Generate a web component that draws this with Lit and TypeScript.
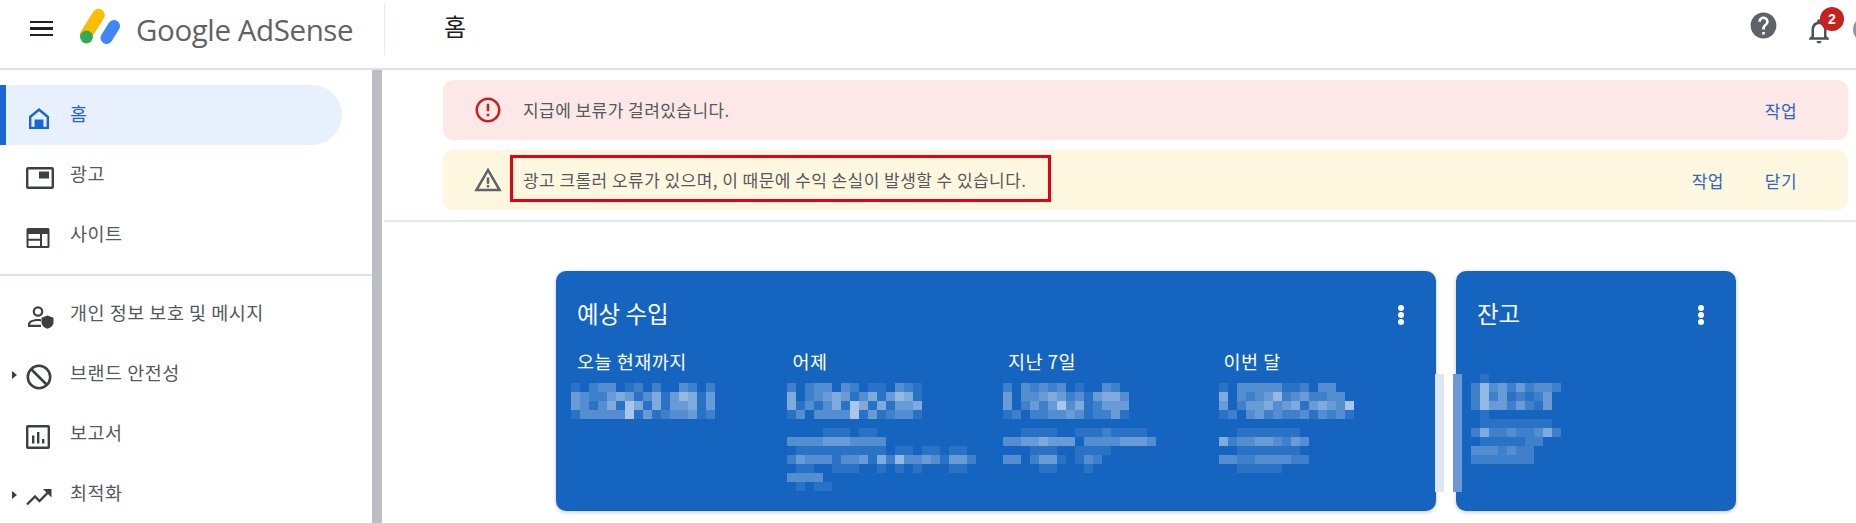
import { LitElement, html, css, svg } from "lit";
import { customElement } from "lit/decorators.js";

const sp = (size: number, d: string, cls = "") => html`<svg class=${cls} width=${size} height=${size} viewBox="0 0 24 24" fill="currentColor"><path d=${d}></path></svg>`;

const ICONS: Record<string, unknown> = {
  home: html`<svg width="26" height="26" viewBox="0 0 26 26"><path d="M13 3 L23 11.2 V24 H3 V11.2 Z M13 6.2 L5.4 12.4 V21.8 H8.6 V14.4 H17.4 V21.8 H20.6 V12.4 Z" fill="#1967d2" fill-rule="evenodd"></path><rect x="9" y="15" width="8" height="8" fill="#1967d2"></rect></svg>`,
  ad: html`<svg width="28" height="24" viewBox="0 0 28 24"><rect x="1.2" y="2.2" width="25.6" height="19.6" rx="1" fill="none" stroke="#3c4043" stroke-width="2.4"></rect><rect x="13" y="5.5" width="10" height="7" fill="#3c4043"></rect></svg>`,
  site: html`<svg width="24" height="22" viewBox="0 0 24 22"><path d="M2 1 H22 A1.5 1.5 0 0 1 23.5 2.5 V19.5 A1.5 1.5 0 0 1 22 21 H2 A1.5 1.5 0 0 1 .5 19.5 V2.5 A1.5 1.5 0 0 1 2 1 Z M2.5 7 V11.8 H14 V7 Z M16 7 V19 H21.5 V7 Z M2.5 13.8 V19 H14 V13.8 Z" fill="#3c4043" fill-rule="evenodd"></path></svg>`,
  privacy: html`<svg width="28" height="24" viewBox="0 0 28 24"><circle cx="12" cy="6.5" r="4.2" fill="none" stroke="#3c4043" stroke-width="2.2"></circle><path d="M2 22 V18.8 C2 15.5 8 14 12 14 C13 14 14 14.1 15 14.3 L15 16.4 C14 16.2 13 16.1 12 16.1 C8.5 16.1 4.2 17.4 4.2 18.8 V19.8 H15 V22 Z" fill="#3c4043"></path><path d="M21.5 10.5 L27.5 12.8 V17 C27.5 20.3 25 22.8 21.5 23.8 C18 22.8 15.5 20.3 15.5 17 V12.8 Z" fill="#3c4043"></path></svg>`,
  block: html`<svg width="26" height="26" viewBox="0 0 26 26"><circle cx="13" cy="13" r="11.2" fill="none" stroke="#3c4043" stroke-width="2.6"></circle><path d="M5 5 L21 21" stroke="#3c4043" stroke-width="2.6"></path></svg>`,
  report: html`<svg width="24" height="24" viewBox="0 0 24 24"><rect x="1.2" y="1.2" width="21.6" height="21.6" rx=".8" fill="none" stroke="#3c4043" stroke-width="2.4"></rect><rect x="6" y="10.5" width="2.4" height="8" fill="#3c4043"></rect><rect x="11" y="7" width="2.4" height="11.5" fill="#3c4043"></rect><rect x="16" y="14" width="2.4" height="4.5" fill="#3c4043"></rect></svg>`,
  trend: html`<svg width="26" height="18" viewBox="0 0 26 18"><path d="M1 16.5 L9 8.5 L13.5 13 L23.5 3" fill="none" stroke="#3c4043" stroke-width="2.4"></path><path d="M17 1 H25.5 V9.5 Z" fill="#3c4043"></path></svg>`,
};

const NAV_TOP = [
  { label: "홈", icon: "home", active: true },
  { label: "광고", icon: "ad" },
  { label: "사이트", icon: "site" },
];
const NAV_BOTTOM = [
  { label: "개인 정보 보호 및 메시지", icon: "privacy" },
  { label: "브랜드 안전성", icon: "block", caret: true },
  { label: "보고서", icon: "report" },
  { label: "최적화", icon: "trend", caret: true },
];

const MAIN_A = ["1023301202003202", "4322454135146514", "4313517515144514", "1333337141233412"];
const MAIN_B = ["202330320110321", "502345413514651", "513135175151445", "130333371412331"];
const MAIN_C = ["203232301003200", "403345423145530", "402424735124440", "120223343122410"];
const MAIN_D = ["103333311203300", "503234623422330", "402445345145437", "120342322313231"];

interface Block { x: number; y: number; rows: string[]; }
const CARD1_BLOCKS: Block[] = [
  { x: 15, y: 112, rows: MAIN_A },
  { x: 231, y: 112, rows: MAIN_B },
  { x: 231, y: 157, rows: ["000011101100000000000", "3333444333300000000000", "011111111110110110110", "243331334152633431442", "011001110010101000110", "3333000000000000", "010110000000000"] },
  { x: 447, y: 112, rows: MAIN_C },
  { x: 447, y: 157, rows: ["00111100111211110", "33445444033334443", "00011100111100000", "33024410132000000", "00001100010000000"] },
  { x: 663, y: 112, rows: MAIN_D },
  { x: 663, y: 157, rows: ["0011111110", "5233443243", "0011111110", "3322333322", "0011111000"] },
];
const CARD2_BLOCKS: Block[] = [
  { x: 15, y: 103, rows: ["0100000000", "2634242332", "2624121240", "2644242140", "0100000000", "0111111110", "2522322352", "0111112200", "3332322000", "2222222000"] },
];

const CELL = 9;

const mosaic = (b: Block) => {
  const w = Math.max(...b.rows.map((r) => r.length)) * CELL;
  const h = b.rows.length * CELL;
  return html`<svg class="mosaic" width=${w} height=${h} style="left:${b.x}px;top:${b.y}px">
    ${b.rows.map((row, y) => [...row].map((c, x) => c === "0" ? null : svg`<rect x=${x * CELL} y=${y * CELL} width=${CELL} height=${CELL} fill="#fff" fill-opacity=${Number(c) * 0.09}></rect>`))}
  </svg>`;
};

const more = html`<svg class="more" width="8" height="22" viewBox="0 0 8 22" fill="#fff"><circle cx="4" cy="4" r="3"></circle><circle cx="4" cy="11" r="3"></circle><circle cx="4" cy="18" r="3"></circle></svg>`;

@customElement("app-root")
export class AppRoot extends LitElement {
  static styles = css`
    :host { display: block; width: 1856px; height: 523px; overflow: hidden; background: #fff; color: #3c4043; font-family: "Noto Sans CJK KR", "Liberation Sans", sans-serif; }
    .app { display: flex; flex-direction: column; height: 523px; }
    header { flex: 0 0 70px; box-sizing: border-box; border-bottom: 2px solid #e0e1e4; display: flex; align-items: flex-start; position: relative; overflow: hidden; }
    .menu { margin: 21px 0 0 30px; width: 23px; height: 15px; display: flex; flex-direction: column; justify-content: space-between; }
    .menu i { display: block; height: 2.4px; background: #202124; }
    .logo { margin: 6px 0 0 27px; flex: none; }
    .brand { margin: 11px 0 0 14px; width: 219px; font: 400 29.5px/38px "Open Sans", sans-serif; color: #5f6368; letter-spacing: -.4px; white-space: nowrap; }
    .vr { margin: 3px 0 0 29px; width: 1px; height: 52px; background: #e8e9eb; }
    .title { margin: 7px 0 0 59px; font-size: 24px; line-height: 38px; color: #202124; }
    .right { position: absolute; top: 0; right: 0; width: 100px; height: 68px; }
    .help { position: absolute; left: -8px; top: 10px; color: #5f6368; }
    .bell { position: absolute; left: 48px; top: 16px; color: #4f5357; }
    .badge { position: absolute; left: 64px; top: 7px; width: 24px; height: 24px; border-radius: 50%; background: #c5221f; color: #fff; font: 700 14px/24px "Liberation Sans", sans-serif; text-align: center; }
    .avatar { position: absolute; left: 97px; top: 16px; width: 27px; height: 27px; border-radius: 50%; background: #90959a; }

    main { flex: 1; display: flex; min-height: 0; }
    .side { flex: 0 0 382px; box-sizing: border-box; border-right: 10px solid #bdbec4; padding-top: 15px; overflow: hidden; }
    .item { position: relative; height: 60px; display: flex; align-items: center; padding-left: 26px; font-size: 18.5px; letter-spacing: .5px; color: #55585c; box-sizing: border-box; }
    .item.active { width: 342px; background: #e8f0fe; border-radius: 0 30px 30px 0; color: #1967d2; border-left: 6px solid #1967d2; padding-left: 20px; }
    .ico { flex: 0 0 44px; display: flex; justify-content: flex-start; align-items: center; padding-top: 5px; }
    .lbl { padding-bottom: 4px; white-space: nowrap; }
    .caret { position: absolute; left: 12px; top: 27px; width: 0; height: 0; border-left: 5px solid #3c4043; border-top: 4px solid transparent; border-bottom: 4px solid transparent; }
    .rule { height: 2px; background: #e0e1e4; margin: 9px 0 8px; }

    .content { flex: 1; min-width: 0; }
    .alerts { margin-left: 2px; padding: 10px 8px 10px 59px; display: flex; flex-direction: column; gap: 10px; border-bottom: 2px solid #e6e7e9; }
    .alert { position: relative; height: 60px; border-radius: 10px; display: flex; align-items: center; padding: 0 51px 0 30px; font-size: 17px; letter-spacing: .45px; color: #55585c; box-sizing: border-box; }
    .alert.err { background: #fce8e6; }
    .alert.warn { background: #fef7e0; }
    .alert svg { flex: none; margin-right: 20px; }
    .alert > span { padding-bottom: 2px; }
    .actions { margin-left: auto; display: flex; gap: 41px; color: #2e68bb; }
    .mark { position: absolute; left: 67px; top: 5px; width: 541px; height: 47px; box-sizing: border-box; border: 3px solid #e60012; padding: 0; }

    .cards { display: flex; gap: 20px; padding: 49px 0 0 174px; }
    .card { position: relative; flex: none; height: 240px; border-radius: 10px; background: #1565c0; color: #fff; box-shadow: 0 1px 4px rgba(60,64,67,.3); box-sizing: border-box; padding: 22px 21px 0; }
    .c1 { width: 880px; }
    .c2 { width: 280px; }
    .chead { display: flex; justify-content: space-between; align-items: center; height: 40px; font-size: 23.5px; }
    .more { margin-right: 10px; margin-top: 4px; }
    .cols { display: grid; grid-template-columns: 215.5px 215.5px 215.5px 1fr; margin-top: 13px; font-size: 18.5px; letter-spacing: .5px; line-height: 30px; }
    .mosaic { position: absolute; }
    .strip { position: absolute; top: 103px; width: 9px; height: 118px; }
    .s1 { left: 879px; background: #dce6f4; }
    .s2 { left: -3px; background: #6c98d6; }
  `;

  private item(n: { label: string; icon: string; active?: boolean; caret?: boolean }) {
    return html`<div class="item ${n.active ? "active" : ""}">
      ${n.caret ? html`<span class="caret"></span>` : ""}
      <span class="ico">${ICONS[n.icon]}</span><span class="lbl">${n.label}</span>
    </div>`;
  }

  render() {
    return html`<div class="app">
      <header>
        <div class="menu"><i></i><i></i><i></i></div>
        <svg class="logo" width="42" height="42" viewBox="0 0 42 42">
          <path d="M6 29 L18.5 9" stroke="#fbbc04" stroke-width="12.5" stroke-linecap="round"></path>
          <path d="M26.5 32 L34 20" stroke="#4285f4" stroke-width="12" stroke-linecap="round"></path>
          <circle cx="6.5" cy="31" r="6.4" fill="#34a853"></circle>
        </svg>
        <div class="brand">Google AdSense</div>
        <div class="vr"></div>
        <div class="title">홈</div>
        <div class="right">
          ${sp(31, "M12 2C6.48 2 2 6.48 2 12s4.48 10 10 10 10-4.48 10-10S17.52 2 12 2zm1 17h-2v-2h2v2zm2.07-7.75l-.9.92C13.45 12.9 13 13.5 13 15h-2v-.5c0-1.1.45-2.1 1.17-2.83l1.24-1.26c.37-.36.59-.86.59-1.41 0-1.1-.9-2-2-2s-2 .9-2 2H8c0-2.21 1.79-4 4-4s4 1.79 4 4c0 .88-.36 1.68-.93 2.25z", "help")}
          ${sp(30, "M12 22c1.1 0 2-.9 2-2h-4c0 1.1.9 2 2 2zm6-6v-5c0-3.07-1.63-5.64-4.5-6.32V4c0-.83-.67-1.5-1.5-1.5s-1.5.67-1.5 1.5v.68C7.64 5.36 6 7.92 6 11v5l-2 2v1h16v-1l-2-2zm-2 1H8v-6c0-2.48 1.51-4.5 4-4.5s4 2.02 4 4.5v6z", "bell")}
          <span class="badge">2</span>
          <span class="avatar"></span>
        </div>
      </header>
      <main>
        <nav class="side">
          ${NAV_TOP.map((n) => this.item(n))}
          <div class="rule"></div>
          ${NAV_BOTTOM.map((n) => this.item(n))}
        </nav>
        <div class="content">
          <section class="alerts">
            <div class="alert err">
              <svg width="30" height="30" viewBox="0 0 24 24" fill="#c5221f"><path d="M11 15h2v2h-2zm0-8h2v6h-2zm.99-5C6.47 2 2 6.48 2 12s4.47 10 9.99 10C17.52 22 22 17.52 22 12S17.52 2 11.99 2zM12 20c-4.42 0-8-3.58-8-8s3.58-8 8-8 8 3.58 8 8-3.58 8-8 8z"></path></svg>
              <span>지급에 보류가 걸려있습니다.</span>
              <div class="actions"><span>작업</span></div>
            </div>
            <div class="alert warn">
              <svg width="30" height="30" viewBox="0 0 24 24" fill="#5f6368"><path d="M1 21h22L12 2 1 21zm3.47-2L12 6l7.53 13H4.47zM11 16h2v2h-2zm0-6h2v5h-2z"></path></svg>
              <span>광고 크롤러 오류가 있으며, 이 때문에 수익 손실이 발생할 수 있습니다.</span>
              <div class="actions"><span>작업</span><span>닫기</span></div>
              <span class="mark"></span>
            </div>
          </section>
          <section class="cards">
            <div class="card c1">
              <div class="chead"><span>예상 수입</span>${more}</div>
              <div class="cols"><span>오늘 현재까지</span><span>어제</span><span>지난 7일</span><span>이번 달</span></div>
              ${CARD1_BLOCKS.map(mosaic)}
              <span class="strip s1"></span>
            </div>
            <div class="card c2">
              <div class="chead"><span>잔고</span>${more}</div>
              ${CARD2_BLOCKS.map(mosaic)}
              <span class="strip s2"></span>
            </div>
          </section>
        </div>
      </main>
    </div>`;
  }
}
